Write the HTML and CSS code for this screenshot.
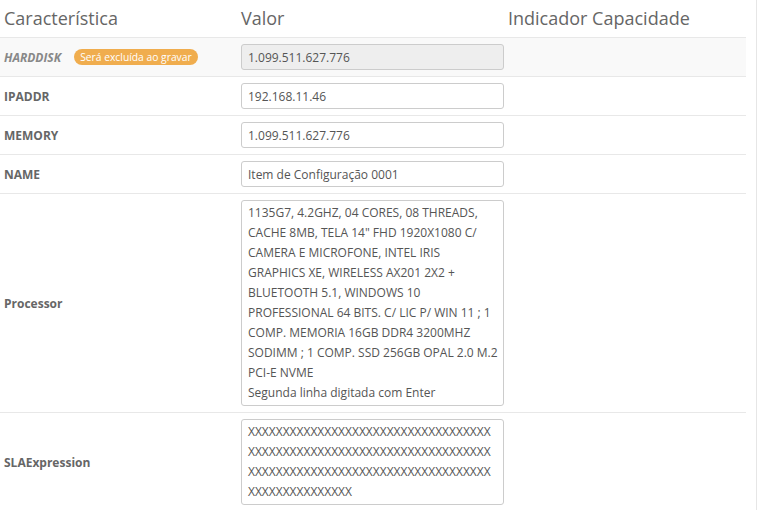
FILE: index.html
```html
<!DOCTYPE html>
<html lang="pt-BR">
<head>
    <meta charset="UTF-8">
    <title>Características do Item</title>
    <link rel="stylesheet" href="styles.css">
</head>
<body>
    <div class="panel">
        <table class="attr-table">
            <thead>
                <tr>
                    <th class="col-name">Característica</th>
                    <th class="col-value">Valor</th>
                    <th>Indicador Capacidade</th>
                </tr>
            </thead>
            <tbody>
                <!-- atributo removido -->
                <tr class="row-removed">
                    <td class="attr-name">HARDDISK <span class="badge">Será excluída ao gravar</span></td>
                    <td class="attr-value"><input type="text" class="field" value="1.099.511.627.776" disabled></td>
                    <td></td>
                </tr>
                <tr>
                    <td class="attr-name">IPADDR</td>
                    <td class="attr-value"><input type="text" class="field" value="192.168.11.46"></td>
                    <td></td>
                </tr>
                <tr>
                    <td class="attr-name">MEMORY</td>
                    <td class="attr-value"><input type="text" class="field" value="1.099.511.627.776"></td>
                    <td></td>
                </tr>
                <tr>
                    <td class="attr-name">NAME</td>
                    <td class="attr-value"><input type="text" class="field" value="Item de Configuração 0001"></td>
                    <td></td>
                </tr>
                <tr>
                    <td class="attr-name">Processor</td>
                    <td class="attr-value"><textarea class="field field-area rows-10">1135G7, 4.2GHZ, 04 CORES, 08 THREADS, CACHE 8MB, TELA 14" FHD 1920X1080 C/ CAMERA E MICROFONE, INTEL IRIS GRAPHICS XE, WIRELESS AX201 2X2 + BLUETOOTH 5.1, WINDOWS 10 PROFESSIONAL 64 BITS. C/ LIC P/ WIN 11 ; 1 COMP. MEMORIA 16GB DDR4 3200MHZ SODIMM ; 1 COMP. SSD 256GB OPAL 2.0 M.2 PCI-E NVME
Segunda linha digitada com Enter</textarea></td>
                    <td></td>
                </tr>
                <tr>
                    <td class="attr-name">SLAExpression</td>
                    <td class="attr-value"><textarea class="field field-area rows-4">XXXXXXXXXXXXXXXXXXXXXXXXXXXXXXXXXXXXXXXXXXXXXXXXXXXXXXXXXXXXXXXXXXXXXXXXXXXXXXXXXXXXXXXXXXXXXXXXXXXXXXXXXXXXXXXXXXXXXXXX</textarea></td>
                    <td></td>
                </tr>
            </tbody>
        </table>
    </div>
</body>
</html>
```

FILE: styles.css
```css
body {
    margin: 0;
    font-family: 'Open Sans', 'DejaVu Sans', sans-serif;
    font-size: 12px;
    color: #555;
    background: #fff;
}

.panel {
    width: 756px;
    min-height: 510px;
    border-right: 1px solid #e6e6e6;
}

.attr-table {
    width: 746px;
    border-collapse: collapse;
}

.attr-table th {
    text-align: left;
    font-size: 18px;
    font-weight: normal;
    color: #666;
    padding: 6px 4px;
    line-height: 25px;
    border-bottom: 1px solid #e8e8e8;
}

.col-name {
    width: 229px;
}

.col-value {
    width: 263px;
}

.attr-table th.col-value,
.attr-table td.attr-value {
    padding-right: 0;
}

.attr-table td {
    padding: 6px 4px;
    border-top: 1px solid #e8e8e8;
    vertical-align: middle;
}

.attr-name {
    font-weight: bold;
    color: #666;
    white-space: nowrap;
}

.row-removed td {
    background: #f9f9f9;
}

.row-removed .attr-name {
    font-style: italic;
    color: #888;
}

.badge {
    display: inline-block;
    margin-left: 10px;
    padding: 0 6px;
    height: 16px;
    line-height: 16px;
    border-radius: 8px;
    background: #f0ad4e;
    color: #fff;
    font-size: 10.3px;
    font-weight: normal;
    font-style: normal;
    vertical-align: 1px;
}

.field {
    display: block;
    box-sizing: border-box;
    width: 263px;
    height: 26px;
    margin: 0;
    padding: 2px 6px;
    border: 1px solid #ccc;
    border-radius: 3px;
    font-family: 'Open Sans', 'DejaVu Sans', sans-serif;
    font-size: 12px;
    color: #555;
    background: #fff;
}

.field:disabled {
    background: #eee;
    color: #555;
}

.field-area {
    padding-right: 5px;
    line-height: 20px;
    resize: none;
    overflow: hidden;
}

.rows-10 {
    height: 206px;
}

.rows-4 {
    height: 86px;
    padding-right: 6px;
}
```
